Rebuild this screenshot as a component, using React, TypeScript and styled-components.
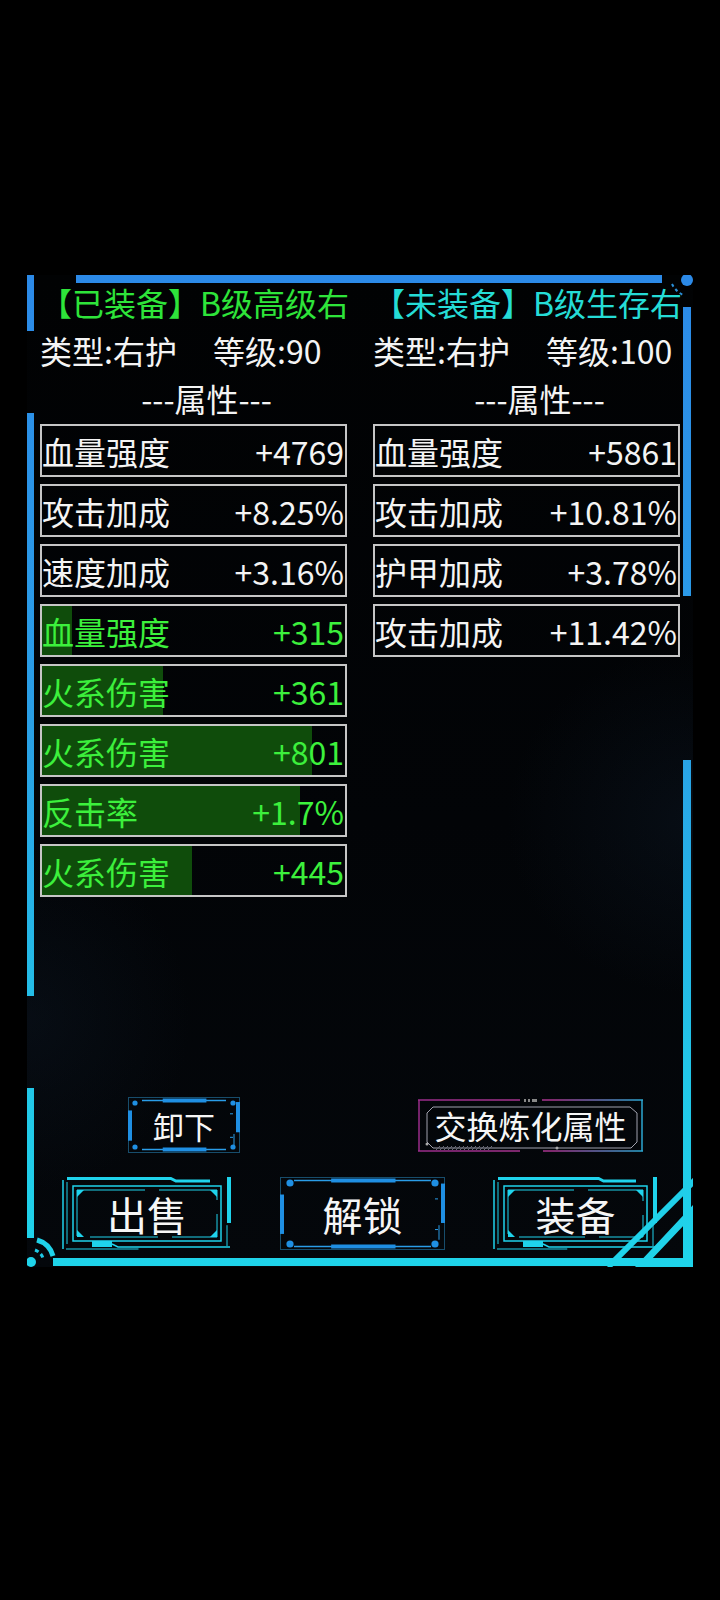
import React from "react";
import styled, { createGlobalStyle } from "styled-components";

const GlobalStyle = createGlobalStyle`
  html, body {
    margin: 0;
    padding: 0;
    background: #000;
  }
  body {
    font-family: "Liberation Sans Narrow", "Noto Sans CJK SC", sans-serif;
    color: #f4f4f4;
  }
  #root {
    min-height: 1600px;
  }
`;

const Page = styled.div`
  width: 720px;
  min-height: 1600px;
  padding-top: 275px;
  box-sizing: border-box;
  background: #000;
`;

const Frame = styled.div`
  position: relative;
  margin-left: 27px;
  width: 666px;
  height: 992px;
  background: radial-gradient(
      ellipse 40% 25% at 100% 55%,
      rgba(16, 30, 46, 0.35),
      rgba(0, 0, 0, 0) 70%
    ),
    radial-gradient(
      ellipse 35% 25% at 0% 75%,
      rgba(16, 30, 46, 0.3),
      rgba(0, 0, 0, 0) 70%
    ),
    linear-gradient(180deg, #010203 0%, #020407 55%, #04070b 100%);
`;

const FrameArt = styled.svg`
  position: absolute;
  left: 0;
  top: 0;
  z-index: 0;
`;

const Content = styled.div`
  position: relative;
  z-index: 1;
  height: 100%;
  box-sizing: border-box;
  padding: 3px 0 17px 13px;
  display: flex;
  flex-direction: column;
`;

const Columns = styled.div`
  display: grid;
  grid-template-columns: 333px 333px;
`;

const Column = styled.div`
  display: flex;
  flex-direction: column;
`;

const Title = styled.div<{ $tone: "green" | "cyan" }>`
  width: 307px;
  white-space: nowrap;
  font-size: 32px;
  line-height: 48px;
  color: ${(p) => (p.$tone === "green" ? "#2ee43a" : "#25dcd6")};
`;

const TypeRow = styled.div`
  display: grid;
  grid-template-columns: 173px auto;
  font-size: 32px;
  line-height: 48px;
  white-space: nowrap;
`;

const Divider = styled.div`
  text-align: center;
  font-size: 32px;
  line-height: 48px;
`;

const StatList = styled.div`
  margin-top: 2px;
  display: flex;
  flex-direction: column;
  gap: 7px;
`;

const Cell = styled.div<{ $green?: boolean }>`
  position: relative;
  width: 307px;
  height: 53px;
  box-sizing: border-box;
  border: 2px solid #c6c6c6;
  display: flex;
  align-items: center;
  justify-content: space-between;
  padding-right: 1px;
  font-size: 32px;
  line-height: 1;
  white-space: nowrap;
  overflow: hidden;
  color: ${(p) => (p.$green ? "#3cf03c" : "#f4f4f4")};
`;

const Fill = styled.div`
  position: absolute;
  left: 0;
  top: 0;
  bottom: 0;
  background: #0f4c0b;
`;

const CellText = styled.span`
  position: relative;
`;

const ActionRow = styled.div`
  margin-top: auto;
  height: 56px;
  display: flex;
  align-items: center;
  justify-content: space-between;
  padding: 0 50px 0 88px;
`;

const MainRow = styled.div`
  margin-top: 24px;
  display: flex;
  justify-content: space-between;
  padding: 0 35px 0 22px;
`;

const TechButton = styled.button<{ $w: number; $h: number; $size: number }>`
  position: relative;
  width: ${(p) => p.$w}px;
  height: ${(p) => p.$h}px;
  padding: 0;
  border: none;
  background: transparent;
  color: #f6f6f6;
  font-family: "Noto Sans CJK SC", sans-serif;
  font-size: ${(p) => p.$size}px;
  display: flex;
  align-items: center;
  justify-content: center;
  cursor: pointer;

  svg {
    position: absolute;
    left: 0;
    top: 0;
  }
`;

const ButtonLabel = styled.span`
  position: relative;
  line-height: 1;
`;

type Stat = { label: string; value: string; fill?: number };

type Gear = {
  title: string;
  tone: "green" | "cyan";
  type: string;
  level: number;
  stats: Stat[];
};

const gears: Gear[] = [
  {
    title: "【已装备】B级高级右",
    tone: "green",
    type: "右护",
    level: 90,
    stats: [
      { label: "血量强度", value: "+4769" },
      { label: "攻击加成", value: "+8.25%" },
      { label: "速度加成", value: "+3.16%" },
      { label: "血量强度", value: "+315", fill: 10 },
      { label: "火系伤害", value: "+361", fill: 40 },
      { label: "火系伤害", value: "+801", fill: 89 },
      { label: "反击率", value: "+1.7%", fill: 85 },
      { label: "火系伤害", value: "+445", fill: 49.5 },
    ],
  },
  {
    title: "【未装备】B级生存右",
    tone: "cyan",
    type: "右护",
    level: 100,
    stats: [
      { label: "血量强度", value: "+5861" },
      { label: "攻击加成", value: "+10.81%" },
      { label: "护甲加成", value: "+3.78%" },
      { label: "攻击加成", value: "+11.42%" },
    ],
  },
];

const FrameDrawing = () => (
  <FrameArt width={666} height={992} viewBox="0 0 666 992">
    <defs>
      <linearGradient id="frameGrad" gradientUnits="userSpaceOnUse" x1="0" y1="0" x2="0" y2="992">
        <stop offset="0" stopColor="#2c8ae8" />
        <stop offset="0.45" stopColor="#2a9fe6" />
        <stop offset="0.8" stopColor="#22c6e8" />
        <stop offset="1" stopColor="#1fd4ea" />
      </linearGradient>
    </defs>
    <g fill="url(#frameGrad)">
      <rect x={49} y={0} width={586} height={8} />
      <circle cx={660} cy={5} r={6} />
      <rect x={656} y={32} width={8} height={289} />
      <rect x={656} y={485} width={8} height={507} />
      <rect x={0} y={0} width={7} height={56} />
      <rect x={0} y={138} width={7} height={583} />
      <rect x={0} y={813} width={7} height={150} />
      <rect x={26} y={983} width={640} height={8} />
      <circle cx={4} cy={987} r={5} />
      <path fillRule="evenodd" d="M666 930 L666 992 L608 992 Z M659 948 L659 985 L624 985 Z" />
    </g>
    <path d="M645 9 Q649 17 658 21" fill="none" stroke="#2a8fd8" strokeWidth={2} strokeDasharray="3 3" />
    <path d="M10 965 A23 23 0 0 1 26 981" fill="none" stroke="url(#frameGrad)" strokeWidth={5} />
    <path d="M8 975 A13 13 0 0 1 16 983" fill="none" stroke="#1fc8e4" strokeWidth={3} strokeDasharray="4 3" />
    <line x1={668} y1={905} x2={581} y2={992} stroke="url(#frameGrad)" strokeWidth={6} />
  </FrameArt>
);

const BlueArt = ({ w, h }: { w: number; h: number }) => {
  const big = h > 60;
  const r = big ? 3.6 : 2.6;
  const ix = big ? 10 : 7;
  const iy = 6;
  return (
    <svg width={w} height={h} viewBox={`0 0 ${w} ${h}`}>
      <rect x={0.5} y={0.5} width={w - 1} height={h - 1} fill="none" stroke="#174d6c" strokeWidth={1} />
      <line x1={14} y1={3.5} x2={w - 14} y2={3.5} stroke="#2a9de8" strokeWidth={1.5} />
      <line x1={w * 0.31} y1={3.5} x2={w * 0.7} y2={3.5} stroke="#1f8fe3" strokeWidth={4} />
      <line x1={14} y1={h - 3.5} x2={w - 14} y2={h - 3.5} stroke="#2a9de8" strokeWidth={1.5} />
      <line x1={w * 0.31} y1={h - 3.5} x2={w * 0.7} y2={h - 3.5} stroke="#1f8fe3" strokeWidth={4} />
      <circle cx={ix} cy={iy} r={r} fill="#1f8fe3" />
      <circle cx={w - ix} cy={iy} r={r} fill="#1f8fe3" />
      <circle cx={ix} cy={h - iy} r={r} fill="#1f8fe3" />
      <circle cx={w - ix} cy={h - iy} r={r} fill="#1f8fe3" />
      <rect x={0} y={h * 0.24} width={4} height={h * 0.54} fill="#1f8fe3" />
      <rect x={w - 4} y={h * 0.09} width={4} height={h * 0.54} fill="#1f8fe3" />
      <line x1={w - 6} y1={h * 0.66} x2={w - 6} y2={h * 0.86} stroke="#2a9de8" strokeWidth={1} />
      <line x1={w - 10} y1={h * 0.3} x2={w - 7} y2={h * 0.3} stroke="#2a9de8" strokeWidth={1} />
      <line x1={w - 10} y1={h * 0.72} x2={w - 7} y2={h * 0.72} stroke="#2a9de8" strokeWidth={1} />
    </svg>
  );
};

const CyanArt = ({ w, h }: { w: number; h: number }) => {
  const c = "#1fd3ec";
  return (
    <svg width={w} height={h} viewBox={`0 0 ${w} ${h}`}>
      <polyline points={`5,1.5 ${w * 0.64},1.5 ${w * 0.67},4 ${w - 22},4`} fill="none" stroke={c} strokeWidth={3} />
      <rect x={w - 5} y={0} width={4} height={h * 0.63} fill={c} />
      <line x1={w - 5} y1={h * 0.66} x2={w - 5} y2={h - 4} stroke={c} strokeWidth={1} />
      <line x1={1} y1={3} x2={1} y2={h - 1} stroke={c} strokeWidth={1.5} />
      <line x1={5} y1={5} x2={5} y2={h - 6} stroke={c} strokeWidth={1} />
      <rect x={11} y={9} width={w - 22} height={h - 18} fill="none" stroke={c} strokeWidth={1.5} />
      <rect x={15} y={13} width={w - 30} height={h - 26} fill="none" stroke={c} strokeWidth={1} strokeDasharray={`${w * 0.4} 14`} />
      <polygon points="15,13 22,13 15,20" fill={c} />
      <polygon points={`${w - 15},13 ${w - 22},13 ${w - 15},20`} fill={c} />
      <polygon points={`15,${h - 13} 22,${h - 13} 15,${h - 20}`} fill={c} />
      <polygon points={`${w - 15},${h - 13} ${w - 22},${h - 13} ${w - 15},${h - 20}`} fill={c} />
      <rect x={30} y={h - 9} width={20} height={6} fill={c} />
      <polyline points={`50,${h - 6} 56,${h - 3} ${w - 2},${h - 3}`} fill="none" stroke={c} strokeWidth={1.5} />
      <line x1={4} y1={h - 1} x2={w * 0.45} y2={h - 1} stroke={c} strokeWidth={1} />
    </svg>
  );
};

const GradientArt = ({ w, h }: { w: number; h: number }) => (
  <svg width={w} height={h} viewBox={`0 0 ${w} ${h}`}>
    <defs>
      <linearGradient id="swapGrad" gradientUnits="userSpaceOnUse" x1="0" y1="0" x2={w} y2="0">
        <stop offset="0" stopColor="#9a2c8a" />
        <stop offset="0.6" stopColor="#a8358f" />
        <stop offset="1" stopColor="#2aa8d2" />
      </linearGradient>
    </defs>
    <g stroke="url(#swapGrad)" strokeWidth={1.5} fill="none">
      <line x1={0} y1={1} x2={102} y2={1} />
      <line x1={124} y1={1} x2={w} y2={1} />
      <line x1={0} y1={h - 1} x2={102} y2={h - 1} />
      <line x1={125} y1={h - 1} x2={w} y2={h - 1} />
      <line x1={1} y1={1} x2={1} y2={h - 1} />
      <line x1={w - 1} y1={1} x2={w - 1} y2={h - 1} />
    </g>
    <rect x={106} y={0} width={2} height={3} fill="#888" />
    <rect x={110} y={0} width={2} height={3} fill="#888" />
    <rect x={114} y={0} width={5} height={3} fill="#888" />
    <path
      d={`M15 8 L${w - 13} 8 L${w - 6} 14 L${w - 6} ${h - 10} L${w - 12} ${h - 4} L15 ${h - 4} L9 ${h - 10} L9 14 Z`}
      fill="none"
      stroke="rgba(215,215,230,0.75)"
      strokeWidth={1}
    />
    <g stroke="#6a6a78" strokeWidth={1}>
      {Array.from({ length: 14 }, (_, i) => (
        <line key={i} x1={18 + i * 4} y1={h - 2} x2={22 + i * 4} y2={h - 6} />
      ))}
    </g>
    <circle cx={9} cy={h - 8} r={1.5} fill="#aaa" />
    <circle cx={139} cy={h - 4} r={1.5} fill="#aaa" />
  </svg>
);

const GearColumn = ({ gear }: { gear: Gear }) => (
  <Column>
    <Title $tone={gear.tone}>{gear.title}</Title>
    <TypeRow>
      <span>类型:{gear.type}</span>
      <span>等级:{gear.level}</span>
    </TypeRow>
    <Divider>---属性---</Divider>
    <StatList>
      {gear.stats.map((s, i) => (
        <Cell key={i} $green={s.fill !== undefined}>
          {s.fill !== undefined && <Fill style={{ width: `${s.fill}%` }} />}
          <CellText>{s.label}</CellText>
          <CellText>{s.value}</CellText>
        </Cell>
      ))}
    </StatList>
  </Column>
);

const App: React.FC = () => {
  return (
    <>
      <GlobalStyle />
      <Page>
        <Frame>
          <FrameDrawing />
          <Content>
            <Columns>
              {gears.map((g, i) => (
                <GearColumn key={i} gear={g} />
              ))}
            </Columns>
            <ActionRow>
              <TechButton $w={112} $h={56} $size={31}>
                <BlueArt w={112} h={56} />
                <ButtonLabel>卸下</ButtonLabel>
              </TechButton>
              <TechButton $w={225} $h={53} $size={32}>
                <GradientArt w={225} h={53} />
                <ButtonLabel>交换炼化属性</ButtonLabel>
              </TechButton>
            </ActionRow>
            <MainRow>
              <TechButton $w={170} $h={73} $size={40}>
                <CyanArt w={170} h={73} />
                <ButtonLabel>出售</ButtonLabel>
              </TechButton>
              <TechButton $w={165} $h={73} $size={40}>
                <BlueArt w={165} h={73} />
                <ButtonLabel>解锁</ButtonLabel>
              </TechButton>
              <TechButton $w={165} $h={73} $size={40}>
                <CyanArt w={165} h={73} />
                <ButtonLabel>装备</ButtonLabel>
              </TechButton>
            </MainRow>
          </Content>
        </Frame>
      </Page>
    </>
  );
};

export default App;
